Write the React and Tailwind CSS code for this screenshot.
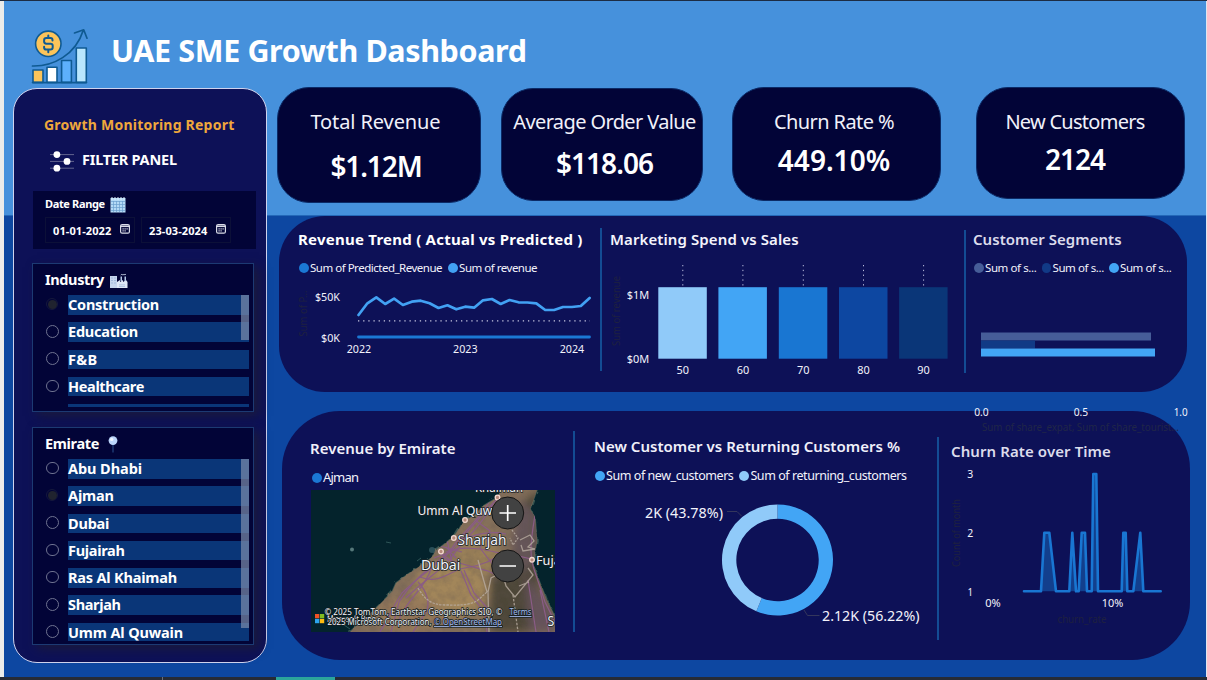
import React from "react";

/* ---------- icons ---------- */

const GrowthLogo = () => (
  <svg width="60" height="59" viewBox="30 26 60 59" fill="none" stroke="#0f5a92" strokeWidth="1.6" strokeLinejoin="round" strokeLinecap="round">
    <rect x="33" y="70" width="10" height="12.4" fill="#fcc45a" />
    <rect x="47" y="67.3" width="10" height="15.1" fill="#ffffff" />
    <rect x="61.6" y="60.5" width="9.8" height="21.9" fill="#5db0fb" />
    <rect x="76.3" y="48" width="10" height="34.4" fill="#b9e6fd" />
    <path d="M32.500 82.600h54" />
    <circle cx="48.3" cy="43.8" r="12.7" fill="#fcc45a" />
    <path d="M52.5 40.6v-.6c0-1.200-.8-2-2-2h-4.200c-1.300 0-2.200.9-2.200 2.200v1.400c0 1.200.9 2.100 2.200 2.100h4.300c1.200 0 2.100.9 2.100 2.100v1.500c0 1.300-.9 2.200-2.200 2.200h-4.300c-1.200 0-2.100-.9-2.100-2.100v-.7M48.300 35.500v2.400M48.300 49.600v2.600" strokeWidth="2" />
    <path d="M32.500 66C53 66.500 75.500 55 83.200 30.500M74.500 33l9.200-3.200 3.300 8.400" strokeWidth="1.700" />
  </svg>
);

const SlidersGlyph = () => (
  <svg width="24" height="22" viewBox="50 151 24 22">
    <path d="M50 154.600h24M50 161.400h24M50 168.200h24" stroke="#62648f" strokeWidth="1" />
    <circle cx="56.900" cy="154.600" r="3.400" fill="#fff" />
    <circle cx="67" cy="161.400" r="3.400" fill="#fff" />
    <circle cx="56.900" cy="168.200" r="3.400" fill="#fff" />
  </svg>
);

const CalendarGlyph = () => (
  <svg width="16" height="16" viewBox="0 0 16 16">
    <rect x="0.500" y="1" width="15" height="14.500" fill="#b4daf6" />
    <path d="M2 0v3M5 0v3M8 0v3M11 0v3M14 0v3" stroke="#dff0fb" strokeWidth="1" />
    <path d="M1 4.500h14M1 7.500h14M1 10.500h14M1 13.500h14M3.500 4v11M6.500 4v11M9.500 4v11M12.500 4v11" stroke="#6b9fce" strokeWidth="0.700" />
  </svg>
);

const DateGlyph = () => (
  <svg width="10" height="10" viewBox="0 0 10 10">
    <rect x="0.600" y="0.600" width="8.800" height="8.600" rx="1.500" fill="none" stroke="#d9dbe8" strokeWidth="1.200" />
    <path d="M1 2.300h8" stroke="#d9dbe8" strokeWidth="1.500" />
    <path d="M2.500 4.900h1.200M4.500 4.900h1.200M6.500 4.900h1.200M2.500 6.900h1.200M4.500 6.900h1.200" stroke="#d9dbe8" strokeWidth="1.100" />
  </svg>
);

const FactoryGlyph = () => (
  <svg width="18" height="16" viewBox="0 0 18 16">
    <path d="M0 3h7v12H0z" fill="#c6d6ee" />
    <path d="M1.500 5h1M4.500 5h1M1.500 7.500h1M4.500 7.500h1M1.500 10h1M4.500 10h1" stroke="#7f9cc9" />
    <path d="M7 15V9l3-2v2l3-2v2L16 7l1.500 2v6z" fill="#dfe8f6" />
    <path d="M10.500 8V3.500h1.500V8zM14.500 8V3.500H16V8z" fill="#b4c8e6" />
    <path d="M9 11.500h6v.8H9zM9 13.300h6v.8H9z" fill="#a5badc" />
    <path d="M10.800 2c1-1.300 1.700 .2 2.500-.3s2 .5 2.700-.7" stroke="#d0dcee" fill="none" />
  </svg>
);

const PinGlyph = () => (
  <svg width="10" height="17" viewBox="0 0 10 17">
    <path d="M5 8v8.500" stroke="#2b5290" strokeWidth="1" />
    <circle cx="5" cy="4.600" r="4.400" fill="#bcd6fb" />
    <circle cx="3.700" cy="3.400" r="1.700" fill="#eef5ff" />
  </svg>
);

/* ---------- sidebar ---------- */

const Option = ({ label, tracking, on }) => (
  <div className="flex h-[27.25px] shrink-0 items-start">
    <span className="flex h-[18px] w-[23px] shrink-0 items-center pl-[1px]">
      {label && (on ? (
        <span className="flex h-3 w-3 items-center justify-center rounded-full border border-[#15183c]">
          <span className="h-[9px] w-[9px] rounded-full bg-[#20232f]" />
        </span>
      ) : (
        <span className="h-[12.5px] w-[12.5px] rounded-full border border-[#6f7391]" />
      ))}
    </span>
    <span className={`h-[19.500px] flex-1 whitespace-nowrap bg-[#0a3678] text-[14.500px] font-bold leading-[18.500px] text-white ${tracking}`}>{label}</span>
  </div>
);

const industries = [
  { label: "Construction", tracking: "tracking-[-0.24px]", on: true },
  { label: "Education", tracking: "tracking-[-0.22px]" },
  { label: "F&B", tracking: "tracking-[0.3px]" },
  { label: "Healthcare", tracking: "tracking-[-0.35px]" },
  { label: "", tracking: "" },
];

const emirates = [
  { label: "Abu Dhabi", tracking: "tracking-[-0.07px]" },
  { label: "Ajman", tracking: "tracking-[-0.15px]", on: true },
  { label: "Dubai", tracking: "tracking-[-0.2px]" },
  { label: "Fujairah", tracking: "tracking-[-0.3px]" },
  { label: "Ras Al Khaimah", tracking: "tracking-[-0.19px]" },
  { label: "Sharjah", tracking: "tracking-[-0.35px]" },
  { label: "Umm Al Quwain", tracking: "tracking-[-0.14px]" },
];

const DateField = ({ value }) => (
  <div className="flex h-[26px] w-[90px] items-center justify-between border border-[#0c1038] pl-[7px] pr-[4px]">
    <span className="text-[11px] font-bold leading-none tracking-[0.1px] text-white">{value}</span>
    <span className="-mt-[2px]"><DateGlyph /></span>
  </div>
);

const Sidebar = () => (
  <aside className="ml-[9px] mt-px h-[575px] w-[254px] shrink-0 rounded-[24px] border border-[#cfd3ee] bg-[#0d1157] pl-[18px]">
    <h2 className="ml-[12px] mt-[26px] h-5 whitespace-nowrap text-[14px] font-bold leading-5 tracking-[0.23px] text-[#efa73c]">Growth Monitoring Report</h2>
    <div className="ml-[18px] mt-[15px] flex h-5 items-center">
      <span className="mt-[3px]"><SlidersGlyph /></span>
      <span className="-mt-[3px] ml-[8px] text-[14.500px] font-bold leading-5 tracking-[-0.23px] text-white">FILTER PANEL</span>
    </div>

    <section className="ml-px mt-[21px] h-[58px] w-[223px] bg-[#020437] pl-[12px]">
      <div className="flex h-[26px] items-center pt-px">
        <span className="w-[65px] whitespace-nowrap text-[11px] font-bold tracking-[-0.35px] text-white">Date Range</span>
        <CalendarGlyph />
      </div>
      <div className="flex gap-[6px]">
        <DateField value="01-01-2022" />
        <DateField value="23-03-2024" />
      </div>
    </section>

    <section className="mt-[14px] h-[149px] w-[222px] border border-[#1c3a73] bg-[#020437] pl-[12px] shadow-[5px_4px_10px_#1a1a3c]">
      <h3 className="flex h-[28px] items-center gap-[6px] pt-[3px] text-[14.500px] font-bold tracking-[-0.37px] text-white">
        Industry <span className="mt-[3px]"><FactoryGlyph /></span>
      </h3>
      <div className="relative mt-[3px] h-[112px] w-[204px] overflow-hidden">
        {industries.map((o, i) => <Option key={i} {...o} />)}
        <span className="absolute right-0 top-0 h-[45px] w-2 bg-[#7c8cab]/70" />
      </div>
    </section>

    <section className="mt-[15px] h-[218px] w-[222px] border border-[#1c3a73] bg-[#020437] pl-[12px] shadow-[5px_4px_10px_#1a1a3c]">
      <h3 className="flex h-[28px] items-center gap-[9px] pt-[3px] text-[14.500px] font-bold tracking-[-0.35px] text-white">
        Emirate <span className="mt-[2px]"><PinGlyph /></span>
      </h3>
      <div className="relative mt-[3px] h-[182px] w-[204px] overflow-hidden">
        {emirates.map((o) => <Option key={o.label} {...o} />)}
        <span className="absolute right-0 top-0 h-[169px] w-2 bg-[#7c8cab]/70" />
      </div>
    </section>
  </aside>
);

/* ---------- KPI cards ---------- */

const Kpi = ({ box, label, labelClass, value, valueClass }) => (
  <div className={`flex shrink-0 flex-col items-center rounded-[32px] border border-[#0b2a66] bg-[#020437] ${box}`}>
    <span className={`whitespace-nowrap text-[20px] leading-6 text-[#f1f1fa] ${labelClass}`}>{label}</span>
    <span className={`whitespace-nowrap text-[28px] font-semibold leading-8 text-white ${valueClass}`}>{value}</span>
  </div>
);

/* ---------- chart helpers ---------- */

const T = ({ x, y, w, s = 11, a = "middle", fill = "#f3f3fb", children, ...rest }) => (
  <text x={x} y={y + s * 0.357} textLength={w} lengthAdjust="spacingAndGlyphs" fontSize={s} textAnchor={a} fill={fill} {...rest}>{children}</text>
);

const VT = ({ x, y, w, s = 11, children }) => (
  <text transform={`translate(${x + 4} ${y}) rotate(-90)`} textLength={w} lengthAdjust="spacingAndGlyphs" fontSize={s} textAnchor="middle" fill="#1e2040">{children}</text>
);

const Key = ({ dot, children }) => (
  <span className="flex items-center gap-[1.5px] whitespace-nowrap text-[#f3f3fb]">
    <span className={`h-[9.500px] w-[9.500px] rounded-full ${dot}`} />
    <span>{children}</span>
  </span>
);

const Divider = ({ box }) => <span className={`w-[2px] shrink-0 bg-[#134c93] ${box}`} />;

const revenue = [315, 303.300, 297.300, 304, 298.700, 305, 301.700, 300.700, 303.300, 308, 305.300, 309.300, 306.700, 307.700, 300.300, 299, 304, 300, 302.300, 302.500, 303.300, 310, 310, 307, 307, 306, 298];
const revenueLine = revenue.map((v, i) => `${(358.500 + i * 8.890).toFixed(1)},${v}`).join(" ");

const RevenueTrend = () => (
  <svg width="321" height="90" viewBox="279 276 321 90">
    <VT x={303} y={313.500} w={46}>Sum of P…</VT>
    <T x={340} y={297} w={25} a="end">$50K</T>
    <T x={340} y={338} w={19} a="end">$0K</T>
    <path d="M358 320.800H590" stroke="#c9c9e2" strokeWidth="1.200" strokeDasharray="1.300 3.850" />
    <path d="M358.500 337H589.500" stroke="#1b78d4" strokeWidth="2.800" strokeLinecap="round" />
    <polyline points={revenueLine} fill="none" stroke="#42a1f3" strokeWidth="2.700" strokeLinejoin="round" strokeLinecap="round" />
    <T x={359} y={349.300} w={24.500}>2022</T>
    <T x={465.300} y={349.300} w={24.500}>2023</T>
    <T x={572} y={349.300} w={24.500}>2024</T>
  </svg>
);

const spend = [
  { x: 658.300, c: "#90caf9", n: "50" },
  { x: 718.400, c: "#42a5f5", n: "60" },
  { x: 778.800, c: "#1976d2", n: "70" },
  { x: 839, c: "#0d47a1", n: "80" },
  { x: 899.100, c: "#0a3678", n: "90" },
];

const SpendBars = () => (
  <svg width="362" height="130" viewBox="602 250 362 130">
    <VT x={615.500} y={311} w={70}>Sum of revenue</VT>
    <T x={649.200} y={295} w={22.500} a="end">$1M</T>
    <T x={649.200} y={359} w={22.500} a="end">$0M</T>
    {spend.map((b) => (
      <g key={b.n}>
        <path d={`M${b.x + 24.500} 265V360`} stroke="#b9bbdc" strokeWidth="1" strokeDasharray="1.300 3.500" />
        <rect x={b.x} y="287.200" width="48.500" height="71.500" fill={b.c} />
        <T x={b.x + 24.500} y={370} w={12.500}>{b.n}</T>
      </g>
    ))}
  </svg>
);

const SegmentBars = () => (
  <svg width="221" height="160" viewBox="966 276 221 160" className="overflow-visible">
    <rect x="981" y="332.500" width="170" height="8" fill="#465d98" />
    <rect x="981" y="340.500" width="54" height="8" fill="#113a86" />
    <rect x="981" y="348.500" width="174" height="8" fill="#42a5f5" />
    <T x={981.500} y={412.300} w={14.500}>0.0</T>
    <T x={1081} y={412.300} w={14.500}>0.5</T>
    <T x={1180.700} y={412.300} w={14}>1.0</T>
    <T x={982} y={427.500} w={197} a="start" s={10.500} fill="#202648">Sum of share_expat, Sum of share_tourist…</T>
  </svg>
);

const arc = (from, to) => {
  const p = (r, t) => {
    const a = t * 2 * Math.PI;
    return `${(777.500 + r * Math.sin(a)).toFixed(2)} ${(560 - r * Math.cos(a)).toFixed(2)}`;
  };
  const big = to - from > 0.5 ? 1 : 0;
  return `M${p(55.500, from)}A55.500 55.500 0 ${big} 1 ${p(55.500, to)}L${p(41.200, to)}A41.200 41.200 0 ${big} 0 ${p(41.200, from)}Z`;
};

const CustomerDonut = () => (
  <svg width="362" height="156" viewBox="575 484 362 156">
    <path d={arc(0, 0.5622)} fill="#42a5f5" />
    <path d={arc(0.5622, 1)} fill="#90caf9" />
    <path d="M727 511.500h10l4.500 4.500M804 610l3.500 5.500h12" fill="none" stroke="#34365c" strokeWidth="1" />
    <T x={645} y={513} w={78} a="start" s={14}>2K (43.78%)</T>
    <T x={822} y={616} w={97.500} a="start" s={14}>2.12K (56.22%)</T>
  </svg>
);

const churnPath = "M1024 591.300H1041L1044.300 532.700H1049.300L1056 591.300H1069.300L1072.300 532.700L1076 591.300H1078.700L1081.700 532.700H1085L1087 591.300H1091.700L1093.300 474H1096.300L1098 591.300H1121.700L1123.300 532.700H1125.700L1127.300 591.300H1133.300L1140.300 532.700L1143.300 591.300H1160.700";

const ChurnArea = () => (
  <svg width="251" height="170" viewBox="939 462 251 170">
    <VT x={955.500} y={533} w={68}>Count of month</VT>
    <T x={970.300} y={474.500} w={6}>3</T>
    <T x={970.300} y={533.300} w={6}>2</T>
    <T x={970.300} y={592.300} w={5.500}>1</T>
    <path d={churnPath} fill="#123f8d" stroke="#1976d2" strokeWidth="2.600" strokeLinejoin="round" strokeLinecap="round" />
    <T x={993} y={603.500} w={15.500}>0%</T>
    <T x={1112.500} y={603.500} w={21.500}>10%</T>
    <T x={1082} y={619} w={49} s={10.500} fill="#1e2040">churn_rate</T>
  </svg>
);

/* ---------- map ---------- */

const land = "M502 490L495 499L483 506L475 515L464 521L456 534L447 542L438 549L430 559L420 566L408 574L396 583L392 592L384 600L376 608L368 617L356 626L350 632H555V617L546 598L538 578L533 563L537 540L535 517L530 509L537 490Z";
const places = [[497.500, 497.500], [465, 520], [453.800, 538], [441, 551.500], [532, 559.800]];

const EmirateMap = () => (
  <svg width="244" height="142" viewBox="311 490 244 142">
    <defs>
      <clipPath id="landClip"><path d={land} /></clipPath>
      <filter id="soft" x="-20%" y="-20%" width="140%" height="140%"><feGaussianBlur stdDeviation="4" /></filter>
      <filter id="grain" x="0" y="0" width="100%" height="100%">
        <feTurbulence type="fractalNoise" baseFrequency="0.12" numOctaves="4" seed="7" />
        <feColorMatrix values="0 0 0 0 0.12  0 0 0 0 0.09  0 0 0 0 0.08  1.800 0 0 0 -0.650" />
      </filter>
      <filter id="rough"><feTurbulence type="fractalNoise" baseFrequency="0.15" numOctaves="2" seed="3" /><feDisplacementMap in="SourceGraphic" scale="5" /></filter>
    </defs>
    <rect x="311" y="490" width="244" height="142" fill="#04232c" />
    <path d={land} fill="#6f6a5c" stroke="#35534f" strokeWidth="1.500" filter="url(#rough)" />
    <g clipPath="url(#landClip)">
      <rect x="311" y="490" width="244" height="142" fill="#85705a" />
      <g filter="url(#soft)">
        <ellipse cx="450" cy="590" rx="38" ry="28" fill="#a2865a" />
        <ellipse cx="478" cy="553" rx="22" ry="22" fill="#9a8058" />
        <ellipse cx="410" cy="615" rx="34" ry="18" fill="#96795a" />
        <path d="M490 582L504 562L520 545L525 500L540 490V560L540 590L555 615V632H490Z" fill="#4d4739" />
        <path d="M518 500L536 512L536 560L520 575L512 545Z" fill="#655559" />
        <path d="M525 575L555 615V632H530Z" fill="#66535c" />
      </g>
      <rect x="311" y="490" width="244" height="142" filter="url(#grain)" opacity="0.32" />
      <g fill="none" stroke="#8a5c86" strokeWidth="1.200">
        <path d="M499 497C480 517 470 528 460 541C445 560 420 575 402 593C395 603 390 615 380 632" />
        <path d="M489 502C478 522 462 532 452 548C441 562 418 571 399 602L391 632" />
        <path d="M493 504C482 525 466 538 456 551C446 568 426 578 406 598" />
        <path d="M446 552C460 546 480 548 495 552S525 556 533 560M458 540C475 535 490 530 506 534" />
        <path d="M442 558C455 562 470 566 488 571L505 579" />
        <path d="M461 571L471 595L485 613L487 632M464 570L474 593L489 610" />
        <path d="M418 582C428 592 430 605 426 612L413 632M432 566C425 590 405 600 397 625" />
        <path d="M475 520L490 531L480 548L497 570" />
        <path d="M535 515C531 540 528 555 536 575L545 602L555 622M528 580L536 632M540 590L549 632" />
        <path d="M420 577C440 585 450 570 465 568S495 560 502 552M438 551L450 560M446 547L456 558M440 546L462 552M447 540L452 562M434 558L458 549" />
      </g>
      <g fill="none" stroke="#b9ada2" strokeWidth="1.300" opacity="0.8">
        <path d="M418 588C425 600 432 605 445 605S470 606 478 600L487 592" strokeDasharray="2.500 1" />
        <path d="M503 572L491 578L488 592L489 632M478 560L483 578L487 592" />
        <path d="M502 572L506 586L515 597L533 575L528 568M519 586L529 582" />
        <path d="M513 595L518 632" strokeDasharray="2.500 1.500" />
        <path d="M520 540L530 535L534 541L528 547L535 549L523 551L521 545" />
        <path d="M512 530L518 538L513 545L510 538" strokeDasharray="2 1.200" />
      </g>
    </g>
    <circle cx="352" cy="549.500" r="2" fill="#56787a" />
    <circle cx="432" cy="550" r="3" fill="#2a4f58" />
    <path d="M386 542l5 1M344 625l6 4M417 561l4-3" stroke="#2e5557" />
    {places.map(([x, y]) => <circle key={x} cx={x} cy={y} r="2.300" fill="#b78a7c" stroke="#f4d9d0" strokeWidth="1.300" />)}
    <g fill="#f1f1ec" stroke="#1b2426" strokeWidth="1.600" paintOrder="stroke">
      <T x={475} y={487.500} w={48} a="start" s={13}>Khaimah</T>
      <T x={417.500} y={510.500} w={92} a="start" s={13}>Umm Al Quwain</T>
      <T x={457.500} y={540} w={49} a="start" s={13.500}>Sharjah</T>
      <T x={421} y={565.500} w={39.500} a="start" s={13.500}>Dubai</T>
      <T x={536} y={560.500} w={48} a="start" s={13}>Fujairah</T>
      <T x={547.500} y={621.500} w={34} a="start" s={13.500}>Sohar</T>
    </g>
    <g fill="#424242" stroke="#151515" strokeWidth="1">
      <circle cx="507.700" cy="513" r="16" />
      <circle cx="507.700" cy="566" r="16" />
    </g>
    <path d="M499.500 513h16.500M507.700 505v16M499.500 566h16.500" stroke="#fff" strokeWidth="1.700" />
    <rect x="315" y="614" width="4.300" height="4.300" fill="#f05125" />
    <rect x="319.900" y="614" width="4.300" height="4.300" fill="#80bb20" />
    <rect x="315" y="618.900" width="4.300" height="4.300" fill="#2da5ee" />
    <rect x="319.900" y="618.900" width="4.300" height="4.300" fill="#fdbb10" />
    <g stroke="#111c1e" strokeWidth="1.500" paintOrder="stroke">
      <T x={327} y={618.500} w={49} a="start" s={8.500}>Microsoft Bing</T>
      <T x={324.500} y={612} w={178} a="start" s={8.500}>© 2025 TomTom, Earthstar Geographics SIO, ©</T>
      <T x={327.500} y={622} w={104} a="start" s={8.500}>2025 Microsoft Corporation,</T>
      <T x={509.500} y={612} w={22} a="start" s={8.500} fill="#a9bdf0" textDecoration="underline">Terms</T>
      <T x={434} y={622} w={68} a="start" s={8.500} fill="#a9bdf0" textDecoration="underline">© OpenStreetMap</T>
    </g>
  </svg>
);

/* ---------- page ---------- */

export default function App() {
  return (
    <div className="flex h-[680px] w-[1207px] flex-col overflow-hidden bg-[#262b36] font-['Noto_Sans','Open_Sans',sans-serif]">
      <div className="h-px shrink-0 bg-[#1c2c44]" />
      <div className="flex h-[676px] shrink-0">
        <div className="w-1 shrink-0 bg-[#ececea]" />
        <div className="flex w-[1202px] shrink-0 flex-col bg-[linear-gradient(#4691dc_0_214px,#2468b8_214px_215px,#0d47a1_215px)]">
          <header className="flex h-[86px] shrink-0 pl-[26px] pt-[25px]">
            <GrowthLogo />
            <h1 className="ml-[21px] mt-[4px] h-10 whitespace-nowrap text-[30.500px] font-bold leading-10 tracking-[-0.38px] text-white">UAE SME Growth Dashboard</h1>
          </header>

          <div className="flex">
            <Sidebar />
            <main className="ml-[10px] flex flex-col">
              <div className="flex h-[129px] items-start">
                <Kpi box="w-[204px] h-[116px] pt-[22px] pr-[7px]" label="Total Revenue" labelClass="tracking-[-0.1px]" value="$1.12M" valueClass="mt-[16px] ml-px tracking-[-1.1px]" />
                <Kpi box="ml-[20px] mt-px w-[202px] h-[113px] pt-[21px]" label="Average Order Value" labelClass="tracking-[-0.62px] ml-[5px]" value="$118.06" valueClass="mt-[13px] ml-[5px] tracking-[-0.95px]" />
                <Kpi box="ml-[29px] w-[209px] h-[114px] pt-[22px] pr-[5px]" label="Churn Rate %" labelClass="tracking-[-0.58px]" value="449.10%" valueClass="mt-[10px]" />
                <Kpi box="ml-[35px] w-[209px] h-[112px] pt-[22px] pr-[11px]" label="New Customers" labelClass="tracking-[-0.73px]" value="2124" valueClass="mt-[9px] tracking-[-1px]" />
              </div>

              <div className="relative z-10 ml-[2px] flex h-[176px] w-[908px] rounded-[46px] bg-[#0d1157]">
                <section className="w-[321px] shrink-0 pt-[13px]">
                  <h3 className="ml-[19px] h-5 whitespace-nowrap text-[15px] font-bold leading-5 tracking-[0.24px] text-white">Revenue Trend ( Actual vs Predicted )</h3>
                  <div className="ml-[20px] mt-[11px] flex h-4 items-center gap-[6px] text-[11.500px] tracking-[-0.49px]">
                    <Key dot="bg-[#1b78d4]">Sum of Predicted_Revenue</Key>
                    <Key dot="bg-[#42a1f3]">Sum of revenue</Key>
                  </div>
                  <RevenueTrend />
                </section>
                <Divider box="mt-[12px] h-[143px]" />
                <section className="w-[362px] shrink-0 pt-[13px]">
                  <h3 className="ml-[8px] h-5 whitespace-nowrap text-[15px] font-semibold leading-5 tracking-[0.1px] text-[#f4f4fc]">Marketing Spend vs Sales</h3>
                  <div className="mt-px"><SpendBars /></div>
                </section>
                <Divider box="mt-[14px] h-[143px]" />
                <section className="w-[221px] shrink-0 pt-[13px]">
                  <h3 className="ml-[7px] h-5 whitespace-nowrap text-[15px] font-semibold leading-5 tracking-[0.03px] text-[#dcdcec]">Customer Segments</h3>
                  <div className="ml-[8px] mt-[11px] flex h-4 items-center text-[11.500px] tracking-[-0.4px]">
                    <span className="w-[67.500px]"><Key dot="bg-[#465d98]">Sum of s...</Key></span>
                    <span className="w-[67.500px]"><Key dot="bg-[#113a86]">Sum of s...</Key></span>
                    <Key dot="bg-[#42a5f5]">Sum of s...</Key>
                  </div>
                  <SegmentBars />
                </section>
              </div>

              <div className="ml-[5px] mt-[19px] flex h-[249px] w-[908px] rounded-[58px] bg-[#0d1157]">
                <section className="w-[291px] shrink-0 pt-[27px]">
                  <h3 className="ml-[28px] h-5 whitespace-nowrap text-[15px] font-semibold leading-5 tracking-[0.03px] text-[#f0f0fa]">Revenue by Emirate</h3>
                  <div className="ml-[30px] mt-[12px] flex h-4 items-center text-[13px] tracking-[-0.8px]">
                    <Key dot="bg-[#1b78d4]">Ajman</Key>
                  </div>
                  <div className="ml-[29px] mt-1"><EmirateMap /></div>
                </section>
                <Divider box="mt-[20px] h-[201px]" />
                <section className="w-[362px] shrink-0 pt-[25px]">
                  <h3 className="ml-[19px] h-5 whitespace-nowrap text-[15px] font-semibold leading-5 tracking-[0.03px] text-[#f0f0fa]">New Customer vs Returning Customers %</h3>
                  <div className="ml-[20px] mt-[12px] flex h-4 items-center gap-[6px] text-[12.500px] tracking-[-0.44px]">
                    <Key dot="bg-[#42a5f5]">Sum of new_customers</Key>
                    <Key dot="bg-[#90caf9]">Sum of returning_customers</Key>
                  </div>
                  <CustomerDonut />
                </section>
                <Divider box="mt-[26px] h-[203px]" />
                <section className="w-[250px] shrink-0 pt-[30px]">
                  <h3 className="ml-[12px] h-5 whitespace-nowrap text-[15px] font-semibold leading-5 tracking-[0.09px] text-[#dcdcec]">Churn Rate over Time</h3>
                  <div className="mt-px"><ChurnArea /></div>
                </section>
              </div>
            </main>
          </div>
        </div>
        <div className="w-px shrink-0 bg-[#dfe6f0]" />
      </div>
      <div className="flex h-[3px] shrink-0">
        <div className="w-[163px] border-r border-[#6b6f78]" />
        <div className="ml-[113px] w-[59px] bg-[#2ba59b]" />
      </div>
    </div>
  );
}
